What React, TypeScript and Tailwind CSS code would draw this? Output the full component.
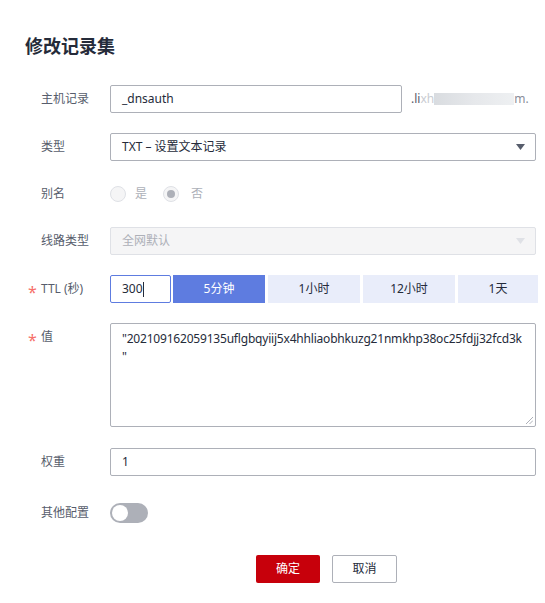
import React from "react";

const font = "font-['Noto_Sans','Noto_Sans_CJK_SC',sans-serif]";

function Label({ text, required }: { text: string; required?: boolean }) {
    return (
        <div className="w-[82px] shrink-0 flex items-center h-[28px] text-[12px] text-[#575d6c]">
            <span className="w-[13px] text-[#f66f6a] text-[16px] leading-none pt-[5px]">{required ? "*" : ""}</span>
            <span>{text}</span>
        </div>
    );
}

function Arrow({ color }: { color: string }) {
    return (
        <svg width="9" height="6" viewBox="0 0 9 6">
            <path d="M0 0 H9 L4.5 6 Z" fill={color} />
        </svg>
    );
}

export default function App() {
    return (
        <div className={`w-[545px] h-[603px] bg-white ${font}`}>
            <h1 className="pl-[25px] pt-[33px] text-[18px] leading-[26px] font-bold text-[#252b3a]">修改记录集</h1>

            <div className="pl-[28px] pr-[9px] mt-[26px] flex flex-col">
                {/* 主机记录 */}
                <div className="flex items-center">
                    <Label text="主机记录" />
                    <div className="w-[292px] h-[28px] border border-[#adb0b8] rounded-[2px] flex items-center px-[11px] text-[12px] text-[#252b3a]">
                        _dnsauth
                    </div>
                    <div className="ml-[9px] flex items-center text-[12px] text-[#575d6c]">
                        <span>.li</span>
                        <span className="text-[#c9ccd2]">xh</span>
                        <div className="w-[80px] h-[12px] bg-gradient-to-r from-[#d9dce0] via-[#e6e8eb] to-[#eef0f2]"></div>
                        <span className="text-[#8a8e99]">m.</span>
                    </div>
                </div>

                {/* 类型 */}
                <div className="flex items-center mt-[20px]">
                    <Label text="类型" />
                    <div className="flex-1 h-[28px] border border-[#adb0b8] rounded-[2px] flex items-center justify-between pl-[11px] pr-[10px] text-[12px] text-[#252b3a]">
                        <span>TXT – 设置文本记录</span>
                        <Arrow color="#575d6c" />
                    </div>
                </div>

                {/* 别名 */}
                <div className="flex items-center mt-[19px]">
                    <Label text="别名" />
                    <div className="flex items-center text-[12px] text-[#adb0b8]">
                        <span className="w-[16px] h-[16px] rounded-full border border-[#dfe1e6] bg-[#f5f5f6]"></span>
                        <span className="ml-[9px]">是</span>
                        <span className="ml-[16px] w-[16px] h-[16px] rounded-full border border-[#dfe1e6] bg-[#f5f5f6] flex items-center justify-center">
                            <span className="w-[8px] h-[8px] rounded-full bg-[#adb0b8]"></span>
                        </span>
                        <span className="ml-[12px]">否</span>
                    </div>
                </div>

                {/* 线路类型 */}
                <div className="flex items-center mt-[19px]">
                    <Label text="线路类型" />
                    <div className="flex-1 h-[28px] border border-[#dfe1e6] bg-[#f5f5f6] rounded-[2px] flex items-center justify-between pl-[11px] pr-[10px] text-[12px] text-[#adb0b8]">
                        <span>全网默认</span>
                        <Arrow color="#dfe1e6" />
                    </div>
                </div>

                {/* TTL */}
                <div className="flex items-center mt-[20px]">
                    <Label text="TTL (秒)" required />
                    <div className="w-[61px] h-[28px] border border-[#5e7ce0] rounded-[2px] flex items-center px-[11px] text-[12px] text-[#252b3a]">
                        300<span className="w-px h-[15px] bg-[#252b3a]"></span>
                    </div>
                    <div className="flex-1 flex gap-[3px] ml-[2px] mr-[-2px] text-[12px]">
                        <div className="flex-1 h-[28px] bg-[#5e7ce0] text-white flex items-center justify-center">5分钟</div>
                        <div className="flex-1 h-[28px] bg-[#e9edfa] text-[#252b3a] flex items-center justify-center">1小时</div>
                        <div className="flex-1 h-[28px] bg-[#e9edfa] text-[#252b3a] flex items-center justify-center">12小时</div>
                        <div className="w-[80px] h-[28px] bg-[#e9edfa] text-[#252b3a] flex items-center justify-center">1天</div>
                    </div>
                </div>

                {/* 值 */}
                <div className="flex items-start mt-[20px]">
                    <Label text="值" required />
                    <div className="relative flex-1 min-w-0 h-[104px] border border-[#adb0b8] rounded-[2px] px-[11px] pt-[6px] text-[12px] leading-[18px] text-[#252b3a] tracking-[-0.2px]">
                        <div className="whitespace-nowrap">"202109162059135uflgbqyiij5x4hhliaobhkuzg21nmkhp38oc25fdjj32fcd3k</div>
                        <div>"</div>
                        <svg className="absolute right-[2px] bottom-[2px]" width="7" height="7" viewBox="0 0 7 7">
                            <path d="M7 0 L0 7 M7 3.5 L3.5 7" stroke="#adb0b8" strokeWidth="1" />
                        </svg>
                    </div>
                </div>

                {/* 权重 */}
                <div className="flex items-center mt-[21px]">
                    <Label text="权重" />
                    <div className="flex-1 h-[28px] border border-[#adb0b8] rounded-[2px] flex items-center px-[11px] text-[12px] text-[#252b3a]">
                        1
                    </div>
                </div>

                {/* 其他配置 */}
                <div className="flex items-center mt-[23px]">
                    <Label text="其他配置" />
                    <div className="w-[38px] h-[20px] rounded-full bg-[#adb0b8] flex items-center px-[2px]">
                        <span className="w-[16px] h-[16px] rounded-full bg-white"></span>
                    </div>
                </div>

                {/* Buttons */}
                <div className="flex mt-[28px] pl-[228px] gap-[12px] text-[12px]">
                    <button className="w-[64px] h-[28px] rounded-[2px] bg-[#c7000b] text-white">确定</button>
                    <button className="w-[65px] h-[28px] rounded-[2px] border border-[#adb0b8] bg-white text-[#252b3a]">取消</button>
                </div>
            </div>
        </div>
    );
}
